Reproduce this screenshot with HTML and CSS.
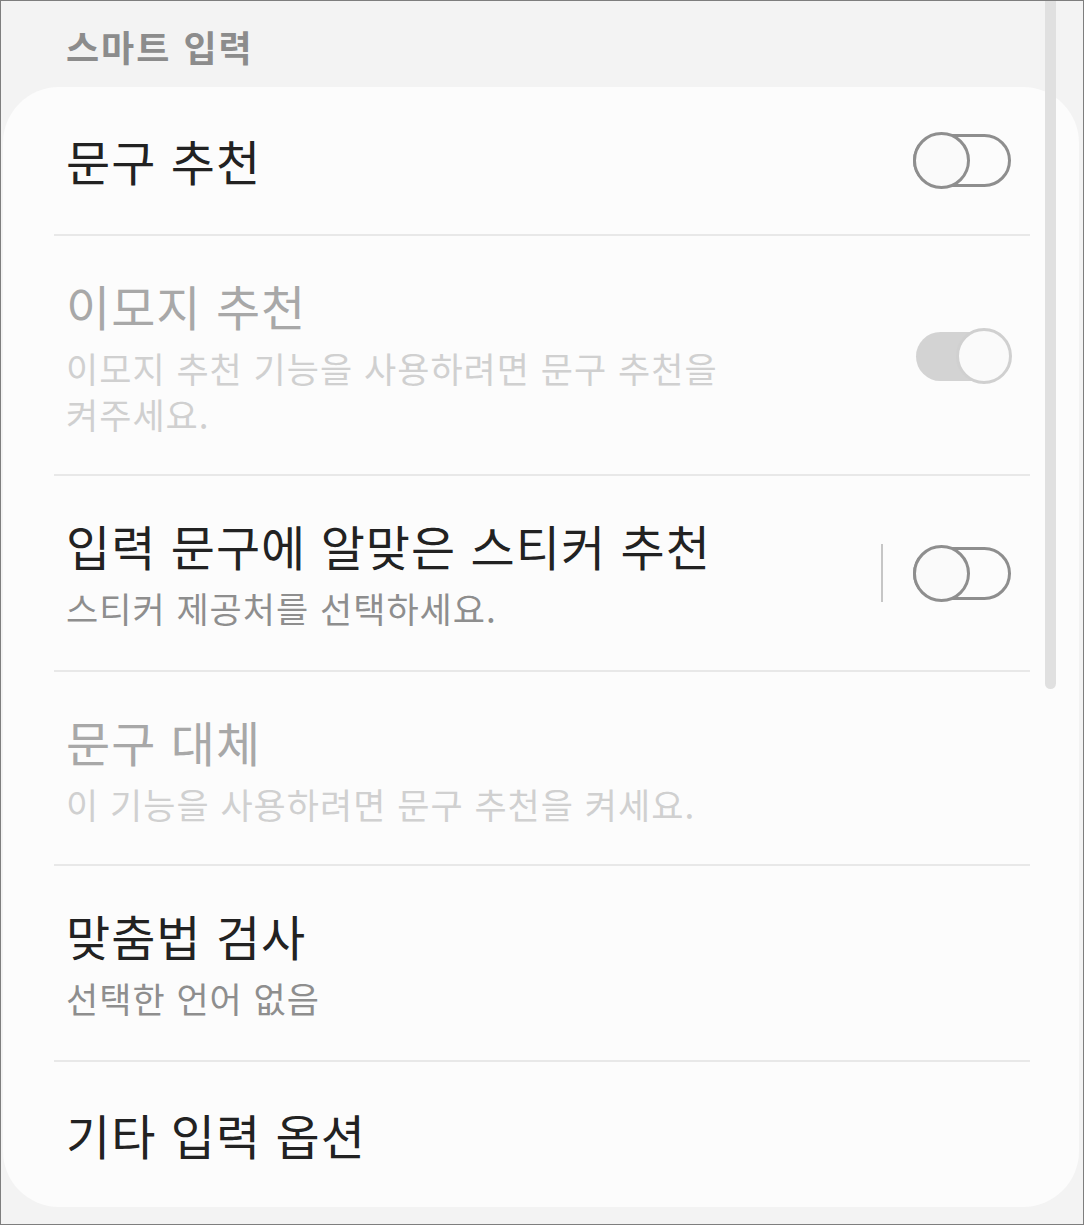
FILE: index.html
```html
<!DOCTYPE html>
<html lang="ko">
<head>
  <meta charset="UTF-8">
  <meta name="viewport" content="width=device-width, initial-scale=1.0">
  <title>스마트 입력</title>
  <link rel="stylesheet" href="styles.css">
</head>
<body>
  <div class="screen">
    <div class="section-label">스마트 입력</div>

    <div class="card">
      <div class="row single first">
        <div class="text">
          <div class="title">문구 추천</div>
        </div>
        <span class="switch"><span class="thumb"></span></span>
      </div>

      <div class="row disabled">
        <div class="text">
          <div class="title">이모지 추천</div>
          <div class="summary">이모지 추천 기능을 사용하려면 문구 추천을 켜주세요.</div>
        </div>
        <span class="switch on"><span class="thumb"></span></span>
      </div>

      <div class="row">
        <div class="text">
          <div class="title">입력 문구에 알맞은 스티커 추천</div>
          <div class="summary">스티커 제공처를 선택하세요.</div>
        </div>
        <span class="split"></span>
        <span class="switch"><span class="thumb"></span></span>
      </div>

      <div class="row disabled">
        <div class="text">
          <div class="title">문구 대체</div>
          <div class="summary">이 기능을 사용하려면 문구 추천을 켜세요.</div>
        </div>
      </div>

      <div class="row">
        <div class="text">
          <div class="title">맞춤법 검사</div>
          <div class="summary">선택한 언어 없음</div>
        </div>
      </div>

      <div class="row single last">
        <div class="text">
          <div class="title">기타 입력 옵션</div>
        </div>
      </div>
    </div>

    <div class="scrollbar"></div>
  </div>
</body>
</html>
```

FILE: styles.css
```css
* {
  box-sizing: border-box;
}

body {
  margin: 0;
  font-family: 'Noto Sans CJK KR', 'Noto Sans', sans-serif;
  font-feature-settings: "palt";
}

.screen {
  position: relative;
  width: 1084px;
  height: 1225px;
  border: 1px solid #7e7e7e;
  background-color: #f3f3f3;
  overflow: hidden;
}

.section-label {
  padding: 21px 0 17px 65px;
  font-size: 36px;
  line-height: 48px;
  font-weight: bold;
  letter-spacing: 2px;
  color: #8c8c8c;
}

.card {
  margin: 0 4px 0 2px;
  padding: 0 49px 0 51px;
  height: 1120px;
  background-color: #fcfcfc;
  border-radius: 56px;
}

.row {
  display: flex;
  align-items: center;
  padding: 39px 19px 39px 12px;
  border-bottom: 2px solid #e8e8e8;
}

.row.single {
  padding-top: 43px;
  padding-bottom: 44px;
}

.row.last {
  border-bottom: none;
  padding-top: 42px;
  padding-bottom: 41px;
}

.row.disabled {
  padding-bottom: 37px;
}

.text {
  flex: 1;
  max-width: 700px;
  word-break: keep-all;
}

.title {
  font-size: 48px;
  line-height: 60px;
  color: #222222;
  letter-spacing: 1px;
}

.summary {
  margin-top: 10px;
  font-size: 35px;
  line-height: 46px;
  color: #8e8e8e;
  letter-spacing: 1px;
}

.row.disabled .title {
  color: #a8a8a8;
}

.row.disabled .summary {
  color: #d0d0d0;
}

.split {
  width: 2px;
  height: 58px;
  margin-left: auto;
  margin-right: 30px;
  background-color: #c6c6c6;
}

.switch {
  position: relative;
  width: 98px;
  height: 53px;
  margin-left: auto;
  border: 3px solid #8e8e8e;
  border-radius: 27px;
}

.split + .switch {
  margin-left: 0;
}

.switch .thumb {
  position: absolute;
  left: -3px;
  top: 50%;
  width: 57px;
  height: 57px;
  margin-top: -28.5px;
  border: 3px solid #8e8e8e;
  border-radius: 50%;
  background-color: #fafafa;
}

.switch.on {
  width: 95px;
  height: 49px;
  border: none;
  border-radius: 25px;
  background-color: #d3d3d3;
}

.switch.on .thumb {
  left: auto;
  right: -1px;
  width: 56px;
  height: 56px;
  margin-top: -28px;
  border-color: #d0d0d0;
}

.scrollbar {
  position: absolute;
  left: 1044px;
  top: 0;
  width: 11px;
  height: 688px;
  background-color: #e0e0e0;
  border-radius: 0 0 6px 6px;
}
```
